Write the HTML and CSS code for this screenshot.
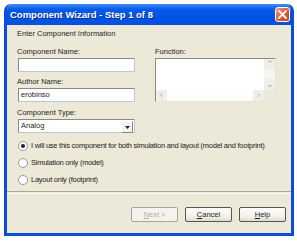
FILE: index.html
```html
<!DOCTYPE html>
<html lang="en">
<head>
  <meta charset="UTF-8" />
  <title>Component Wizard</title>
  <link rel="stylesheet" href="styles.css">
</head>
<body>

<div class="window">
  <!-- Title bar -->
  <div class="titlebar">
    <span class="title">Component Wizard - Step 1 of 8</span>
    <span class="close-btn">
      <svg width="9" height="9" viewBox="0 0 9 9"><path d="M1 1 L8 8 M8 1 L1 8" stroke="#fff" stroke-width="1.8" stroke-linecap="square"/></svg>
    </span>
  </div>

  <div class="content">
    <div class="section-label">Enter Component Information</div>

    <div class="fields">
      <div class="col-left">
        <div class="label">Component Name:</div>
        <div class="input"></div>
        <div class="label gap">Author Name:</div>
        <div class="input">erobinso</div>
        <div class="label gap-lg">Component Type:</div>
        <div class="input select">
          <span>Analog</span>
          <span class="drop-btn">
            <svg width="5" height="3" viewBox="0 0 5 3"><path d="M0 0 H5 L2.5 3 Z" fill="#222"/></svg>
          </span>
        </div>
      </div>

      <div class="col-right">
        <div class="label">Function:</div>
        <div class="textarea">
          <div class="ta-main">
            <div class="ta-text"></div>
            <div class="vscroll">
              <span class="sb-btn">&#8963;</span>
              <span class="sb-btn">&#8964;</span>
            </div>
          </div>
          <div class="hscroll">
            <span class="sb-btn">&lsaquo;</span>
            <span class="sb-track"></span>
            <span class="sb-btn">&rsaquo;</span>
            <span class="sb-corner"></span>
          </div>
        </div>
      </div>
    </div>

    <div class="radios">
      <div class="radio-row"><span class="radio checked"></span>I will use this component for both simulation and layout (model and footprint)</div>
      <div class="radio-row"><span class="radio"></span>Simulation only (model)</div>
      <div class="radio-row"><span class="radio"></span>Layout only (footprint)</div>
    </div>
  </div>

  <div class="separator"></div>

  <div class="buttons">
    <span class="btn disabled"><u>N</u>ext &gt;</span>
    <span class="btn"><u>C</u>ancel</span>
    <span class="btn"><u>H</u>elp</span>
  </div>
</div>

</body>
</html>
```

FILE: styles.css
```css
body {
  margin: 0;
  background: #fff;
  font-family: 'Liberation Sans', Arial, sans-serif;
  font-size: 7.5px;
  color: #1e1e1e;
}
.window {
  margin: 4px 0 0 4px;
  width: 290px;
  height: 232px;
  box-sizing: border-box;
  background: #ece9d8;
  border: 3px solid #0a4fd8;
  border-top: none;
  border-radius: 7px 7px 0 0;
  display: flex;
  flex-direction: column;
  overflow: hidden;
}
.titlebar {
  height: 21px;
  flex-shrink: 0;
  margin: 0 -3px;
  border-radius: 7px 7px 0 0;
  background: linear-gradient(#3d8ff8 0%, #0a5ae8 25%, #0054e3 60%, #0650e0 100%);
  display: flex;
  align-items: center;
  justify-content: space-between;
  padding: 0 4px 0 6px;
}
.title {
  color: #fff;
  font-weight: bold;
  font-size: 9.5px;
  text-shadow: 1px 1px 0 #0a2a90;
}
.close-btn {
  width: 13px;
  height: 13px;
  border: 1px solid #fff;
  border-radius: 3px;
  background: linear-gradient(135deg, #f49b7e, #e2572f 55%, #c9401b);
  display: flex;
  align-items: center;
  justify-content: center;
}
.content {
  padding: 4px 0 0 10px;
  flex: 1;
  min-height: 0;
}
.section-label, .label {
  line-height: 10px;
}
.fields {
  display: flex;
  gap: 20px;
  margin-top: 8px;
}
.col-left {
  width: 117px;
  padding-left: 1px;
}
.col-right {
  width: 121px;
}
.label.gap { margin-top: 5px; margin-left: -1px; }
.label.gap-lg { margin-top: 6px; margin-left: -1px; }
.col-left .label:first-child { margin-left: -1px; }
.input {
  margin-top: 1px;
  height: 14px;
  box-sizing: border-box;
  background: #fff;
  border: 1px solid #b8c8d8;
  border-top-color: #8a8a80;
  border-left-color: #8a8a80;
  line-height: 12px;
  padding-left: 2px;
}
.select {
  display: flex;
  justify-content: space-between;
  padding-right: 1px;
}
.drop-btn {
  width: 10px;
  height: 10px;
  margin-top: 1px;
  background: #f4f3ee;
  border: 1px solid;
  border-color: #fff #8a887c #8a887c #fff;
  display: flex;
  align-items: center;
  justify-content: center;
}
.textarea {
  margin-top: 1px;
  height: 44px;
  box-sizing: border-box;
  border: 1px solid #8a8a80;
  border-right-color: #e8e6dc;
  border-bottom-color: #e8e6dc;
  background: #fff;
  display: flex;
  flex-direction: column;
}
.ta-main {
  flex: 1;
  display: flex;
}
.ta-text { flex: 1; }
.vscroll {
  width: 11px;
  background: #f6f5f0;
  display: flex;
  flex-direction: column;
  justify-content: space-between;
}
.hscroll {
  height: 11px;
  display: flex;
  background: #f6f5f0;
}
.sb-btn {
  width: 11px;
  height: 11px;
  color: #a8aab8;
  font-size: 9px;
  line-height: 11px;
  text-align: center;
  background: #efeee8;
}
.sb-track { flex: 1; background: #fdfdfb; }
.sb-corner { width: 11px; background: #ece9d8; }
.radios {
  margin-top: 8px;
  padding-left: 1px;
}
.radio-row {
  display: flex;
  align-items: center;
  line-height: 10px;
  margin-bottom: 7px;
  white-space: nowrap;
  letter-spacing: -0.25px;
}
.radio {
  width: 8px;
  height: 8px;
  flex-shrink: 0;
  border-radius: 50%;
  border: 1px solid #9a9890;
  background: #fff;
  margin-right: 3px;
  display: flex;
  align-items: center;
  justify-content: center;
}
.radio.checked::after {
  content: "";
  width: 4px;
  height: 4px;
  border-radius: 50%;
  background: #222;
}
.separator {
  height: 1px;
  flex-shrink: 0;
  border-top: 1px solid #aca899;
  border-bottom: 1px solid #fff;
}
.buttons {
  height: 39px;
  flex-shrink: 0;
  display: flex;
  justify-content: flex-end;
  gap: 7px;
  padding: 13px 5px 0 0;
  box-sizing: border-box;
}
.btn {
  width: 47px;
  height: 15px;
  box-sizing: border-box;
  border: 1px solid #555;
  border-radius: 2px;
  background: linear-gradient(#fdfdfb, #f0efe8 70%, #dcdad0);
  text-align: center;
  line-height: 13px;
}
.btn.disabled {
  color: #b0aea0;
  border-color: #a8a698;
  background: #f4f3ee;
}
```
